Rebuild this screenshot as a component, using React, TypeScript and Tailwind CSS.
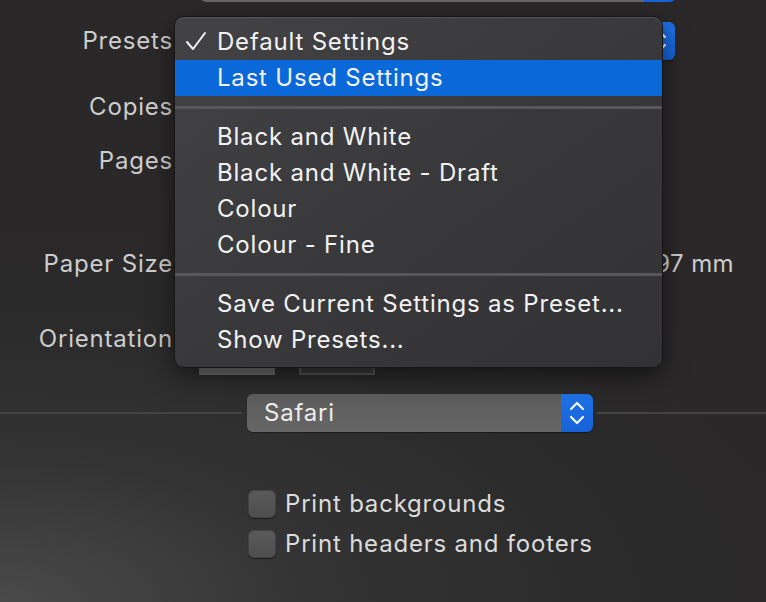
import type {ReactNode} from 'react';

const FONT = "font-['Inter','Noto_Sans',sans-serif] tracking-[0.8px]";

const Chevrons = () => (
  <svg width="16" height="26" viewBox="0 0 16 26" fill="none" stroke="#f4f7ff" strokeWidth="2.2" strokeLinecap="round" strokeLinejoin="round">
    <polyline points="2,9 8,3 14,9" />
    <polyline points="2,17 8,23 14,17" />
  </svg>
);

const PopUp = ({label, className}: {label?: string; className?: string}) => (
  <div className={`flex h-[38px] rounded-[6px] overflow-hidden shadow-[0_1px_1px_rgba(0,0,0,0.4)] ${className ?? ''}`}>
    <div className="flex-1 flex items-center pl-[17px] bg-gradient-to-b from-[#5c5c5c] to-[#666] text-[#ececec] text-[24px]">
      {label}
    </div>
    <div className="w-[32px] flex items-center justify-center bg-gradient-to-b from-[#1f72e6] to-[#1662d6]">
      <Chevrons />
    </div>
  </div>
);

const Row = ({label, className, children}: {label: string; className?: string; children?: ReactNode}) => (
  <div className={`flex items-start ${className ?? ''}`}>
    <div className="w-[174px] shrink-0 pr-[1px] h-[38px] leading-[38px] text-right text-[24px] text-[#cdcdcd]">
      {label}
    </div>
    <div className="pl-[25px]">{children}</div>
  </div>
);

const Checkbox = ({label, className}: {label: string; className?: string}) => (
  <div className={`flex items-center h-[28px] pl-[248px] ${className ?? ''}`}>
    <div className="w-[28px] h-[28px] rounded-[6px] bg-gradient-to-b from-[#5a5a5a] to-[#4e4e4e] shadow-[0_1px_1px_rgba(0,0,0,0.5)] border border-[#444]" />
    <span className="ml-[9px] text-[24px] text-[#dcdcdc]">{label}</span>
  </div>
);

const MENU_GROUPS = [
  ['Default Settings', 'Last Used Settings'],
  ['Black and White', 'Black and White - Draft', 'Colour', 'Colour - Fine'],
  ['Save Current Settings as Preset...', 'Show Presets...'],
];

const CheckMark = () => (
  <svg width="22" height="20" viewBox="0 0 22 20" fill="none" stroke="#f2f2f2" strokeWidth="2" strokeLinecap="round" strokeLinejoin="round">
    <polyline points="2,11 8,18 20,2" />
  </svg>
);

const PresetsMenu = () => (
  <div className="absolute left-[174px] top-[16px] w-[489px] h-[352px] rounded-[10px] border border-[#161616] bg-gradient-to-br from-[#434345] via-[#39393b] to-[#323234] shadow-[0_8px_24px_rgba(0,0,0,0.5),inset_0_1px_0_rgba(255,255,255,0.12)] py-[7px] text-[24px] text-[#f2f2f2]">
    {MENU_GROUPS.map((group, gi) => (
      <div key={gi}>
        {gi > 0 && (
          <div className="h-[23px] flex items-center">
            <div className="h-[3px] w-full bg-[#58585a]" />
          </div>
        )}
        {group.map((item) => (
          <div
            key={item}
            className={`relative h-[36px] flex items-center pl-[42px] ${item === 'Last Used Settings' ? 'bg-[#0a68d9]' : ''}`}
          >
            {item === 'Default Settings' && (
              <span className="absolute left-[10px] top-[7px]">
                <CheckMark />
              </span>
            )}
            {item}
          </div>
        ))}
      </div>
    ))}
  </div>
);

export default function App() {
  return (
    <div
      className={`relative w-[766px] h-[602px] overflow-hidden ${FONT} bg-[radial-gradient(ellipse_120%_70%_at_0%_100%,#4a4a4a_0%,#333_35%,#2b2a2a_70%,#2a2828_100%)]`}
    >
      <div className="flex flex-col">
        <div className="h-[2px] overflow-hidden">
          <PopUp className="ml-[200px] w-[476px] -mt-[36px]" />
        </div>

        <Row label="Presets" className="mt-[20px]">
          <PopUp label="Default Settings" className="w-[476px]" />
        </Row>
        <Row label="Copies" className="mt-[28px]" />
        <Row label="Pages" className="mt-[16px]" />
        <Row label="Paper Size" className="mt-[65px]">
          <div className="w-[535px] h-[38px] leading-[38px] text-right text-[24px] tracking-[0.4px] text-[#cdcdcd]">
            210 by 297 mm
          </div>
        </Row>
        <Row label="Orientation" className="mt-[37px] h-[55px]">
          <div className="flex gap-[24px]">
            <div className="w-[76px] h-[55px] bg-[#6b6b6b]" />
            <div className="w-[76px] h-[55px] bg-[#3a3a3a] border-2 border-[#555]" />
          </div>
        </Row>

        <div className="mt-[19px] flex items-center">
          <div className="w-[242px] h-[2px] bg-[#444]" />
          <PopUp label="Safari" className="ml-[5px] w-[346px]" />
          <div className="flex-1 ml-[4px] h-[2px] bg-[#444]" />
        </div>

        <Checkbox label="Print backgrounds" className="mt-[58px]" />
        <Checkbox label="Print headers and footers" className="mt-[12px]" />
      </div>

      <PresetsMenu />
    </div>
  );
}
